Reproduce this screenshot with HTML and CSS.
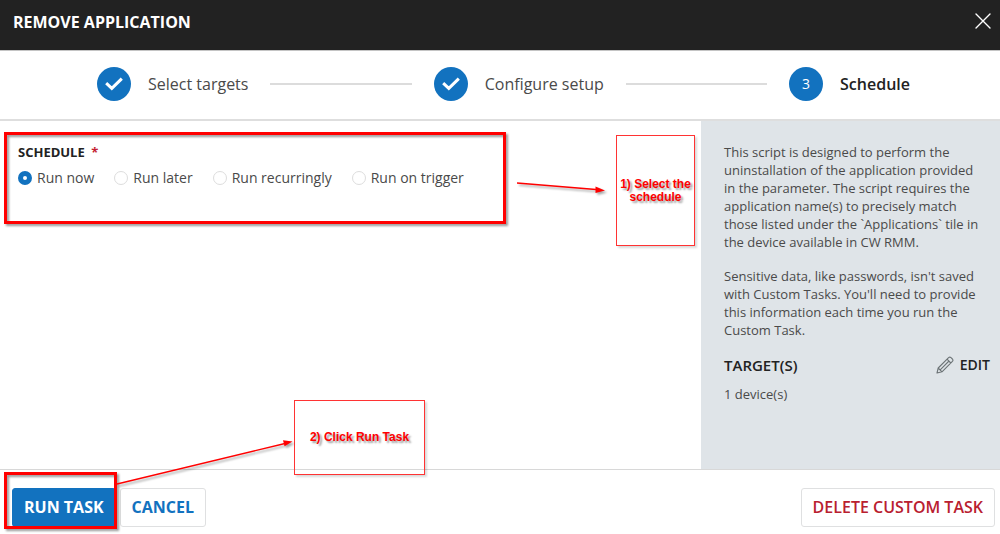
FILE: index.html
```html
<!DOCTYPE html>
<html lang="en">
<head>
<meta charset="utf-8">
<meta name="viewport" content="width=device-width, initial-scale=1">
<title>Remove Application</title>
<link rel="stylesheet" href="styles.css">
</head>
<body>
<div class="dialog">
  <header class="titlebar">
    <h1 class="title">REMOVE APPLICATION</h1>
    <button class="close" type="button" aria-label="Close">
      <svg width="16" height="16" viewBox="0 0 16 16" fill="none" stroke="#fff" stroke-width="1.4" stroke-linecap="round"><path d="M1 1l14 14M15 1L1 15"/></svg>
    </button>
  </header>

  <ol class="stepper">
    <li class="step">
      <span class="badge"><svg width="18" height="14" viewBox="0 0 18 14" fill="none" stroke="#fff" stroke-width="3"><path d="M1.2 6.2l5.6 5.2L16.8 1.6"/></svg></span>
      <span class="step-label">Select targets</span>
    </li>
    <li class="rule" aria-hidden="true"></li>
    <li class="step">
      <span class="badge"><svg width="18" height="14" viewBox="0 0 18 14" fill="none" stroke="#fff" stroke-width="3"><path d="M1.2 6.2l5.6 5.2L16.8 1.6"/></svg></span>
      <span class="step-label">Configure setup</span>
    </li>
    <li class="rule" aria-hidden="true"></li>
    <li class="step current" aria-current="step">
      <span class="badge">3</span>
      <span class="step-label">Schedule</span>
    </li>
  </ol>

  <div class="content">
    <main class="panel">
      <fieldset class="schedule">
        <legend class="legend">SCHEDULE <span class="required">*</span></legend>
        <div class="options">
          <label class="option"><input class="radio" type="radio" name="schedule" checked>Run now</label>
          <label class="option"><input class="radio" type="radio" name="schedule">Run later</label>
          <label class="option"><input class="radio" type="radio" name="schedule">Run recurringly</label>
          <label class="option"><input class="radio" type="radio" name="schedule">Run on trigger</label>
        </div>
      </fieldset>
    </main>
    <aside class="sidebar">
      <p class="text">This script is designed to perform the uninstallation of the application provided in the parameter. The script requires the application name(s) to precisely match those listed under the `Applications` tile in the device available in CW RMM.</p>
      <p class="text">Sensitive data, like passwords, isn't saved with Custom Tasks. You'll need to provide this information each time you run the Custom Task.</p>
      <div class="targets">
        <h2 class="targets-title">TARGET(S)</h2>
        <button class="edit" type="button">
          <svg width="18" height="18" viewBox="0 0 18 18" fill="none" stroke="#6c7376" stroke-width="1.1" stroke-linejoin="round"><path d="M1 17l1.2-5L12.6 1.6q1.2-1.1 2.4 0l1.4 1.4q1.1 1.2 0 2.4L6 15.8zM2.2 12L6 15.8M11 3.2L14.8 7M13 5L4.2 13.8"/></svg>
          EDIT
        </button>
      </div>
      <p class="text">1 device(s)</p>
    </aside>
  </div>

  <footer class="footer">
    <button class="btn primary" type="button">RUN TASK</button>
    <button class="btn cancel" type="button">CANCEL</button>
    <button class="btn danger" type="button">DELETE CUSTOM TASK</button>
  </footer>

  <div class="mark mark-schedule"></div>
  <div class="mark mark-run"></div>
  <div class="note note-schedule">1) Select the schedule</div>
  <div class="note note-run">2) Click Run Task</div>
  <svg class="arrows" width="620" height="500" viewBox="0 0 620 500" fill="red" stroke="red" aria-hidden="true">
    <path d="M517 183L596 189.500" stroke-width="1.500"/>
    <path d="M605 190.500l-9.500-4v6.500z" stroke="none"/>
    <path d="M117 484L285 443.500" stroke-width="1.300"/>
    <path d="M292.500 441.500l-9.500-1.200 1.600 6z" stroke="none"/>
  </svg>
</div>
</body>
</html>
```
FILE: styles.css
```css
* { box-sizing: border-box; }
body {
  margin: 0;
  background: #fff;
  color: #4a4a4a;
  font: 14px/18px "Open Sans", "Noto Sans", sans-serif;
}
h1, h2, p, ol { margin: 0; padding: 0; }
button { font: inherit; cursor: pointer; }

.dialog {
  position: relative;
  display: flex;
  flex-direction: column;
  min-height: 100vh;
}

.titlebar {
  display: flex;
  align-items: flex-start;
  justify-content: space-between;
  padding: 12px 8px 18px 13px;
  background: #222;
  border-bottom: 1px solid #c4c4c4;
}
.title { color: #fff; font-size: 16px; line-height: 20px; font-weight: 700; }
.close { display: flex; padding: 1px; border: 0; background: none; }

.stepper {
  display: flex;
  align-items: center;
  gap: 22px;
  padding: 16px 90px 18px 97px;
  border-bottom: 2px solid #dedede;
  list-style: none;
}
.step { display: flex; align-items: center; gap: 17px; font-size: 16px; line-height: 24px; }
.badge {
  display: flex;
  align-items: center;
  justify-content: center;
  width: 34px;
  height: 34px;
  border-radius: 50%;
  background: #1272bf;
  color: #fff;
  font-size: 14px;
}
.rule { flex: 1; height: 2px; background: #dcdcdc; }
.current .step-label { color: #222; font-weight: 600; }

.content { display: flex; flex: 1; }
.panel { flex: 1; padding: 22px 18px; }
.schedule { margin: 0; padding: 0; border: 0; }
.legend { padding: 0; color: #222; font-size: 13px; font-weight: 700; }
.required { margin-left: 3px; color: #c41f33; }
.options { display: flex; flex-wrap: wrap; gap: 20px; margin-top: 8px; }
.option { display: flex; align-items: center; gap: 5px; }
.radio {
  appearance: none;
  width: 14px;
  height: 14px;
  margin: 0;
  border: 1px solid #ddd;
  border-radius: 50%;
  background: #fff;
}
.radio:checked { border: 5px solid #1272bf; }

.sidebar {
  display: flex;
  flex-direction: column;
  gap: 16px;
  width: 299px;
  padding: 22px 10px 22px 23px;
  background: #dfe4e8;
}
.text { max-width: 260px; font-size: 13px; }
.targets { display: flex; align-items: center; justify-content: space-between; margin-bottom: -6px; }
.targets-title { color: #222; font-size: 15px; font-weight: 600; line-height: 20px; }
.edit {
  display: flex;
  align-items: center;
  gap: 6px;
  padding: 0;
  border: 0;
  background: none;
  color: #222;
  font-weight: 600;
}

.footer {
  display: flex;
  gap: 4px;
  padding: 18px 5px 7px 12px;
  border-top: 1px solid #d8d8d8;
}
.btn {
  padding: 8px 11px;
  border: 1px solid #dfe0e1;
  border-radius: 3px;
  background: #fff;
  color: #1272bf;
  font-size: 16px;
  line-height: 21px;
  font-weight: 600;
}
.primary { background: #1272bf; border-color: #1272bf; color: #fff; }
.primary, .cancel { font-weight: 700; }
.danger { margin-left: auto; color: #b9202f; }

/* Walkthrough callouts laid over the dialog */
.mark, .note, .arrows { position: absolute; pointer-events: none; }
.mark { border: 3px solid red; filter: drop-shadow(2px 2px 1px rgba(0, 0, 0, .4)); }
.mark-schedule { left: 4px; top: 132px; width: 502px; height: 92px; }
.mark-run { left: 4px; top: 472px; width: 113px; height: 57px; }
.note {
  display: flex;
  align-items: center;
  justify-content: center;
  border: 1px solid #f33;
  color: red;
  font: bold 12px/13px "Liberation Sans", Arial, sans-serif;
  text-align: center;
  text-shadow: 2px 2px 2px rgba(0, 0, 0, .4);
  box-shadow: 2px 2px 2px rgba(0, 0, 0, .15);
}
.note-schedule { left: 616px; top: 135px; width: 79px; height: 111px; }
.note-run { left: 294px; top: 400px; width: 131px; height: 75px; }
.arrows { left: 0; top: 0; filter: drop-shadow(2px 2px 1px rgba(0, 0, 0, .35)); }
```
